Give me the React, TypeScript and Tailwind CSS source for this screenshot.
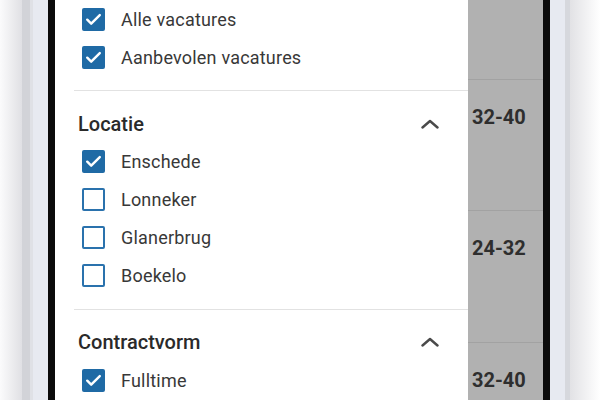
import { ReactNode } from "react";

function Box({ checked }: { checked: boolean }) {
  if (checked) {
    return (
      <div className="w-[23px] h-[23px] rounded-[2px] bg-[#1f6aa5] flex items-center justify-center shrink-0">
        <svg width="23" height="23" viewBox="0 0 22 22" fill="none">
          <path d="M5 11.2l3.8 3.8L17 6.8" stroke="white" strokeWidth="2.3" strokeLinecap="round" strokeLinejoin="round" />
        </svg>
      </div>
    );
  }
  return <div className="w-[23px] h-[23px] rounded-[2px] border-2 border-[#2a72ad] bg-white shrink-0" />;
}

function Item({ label, checked }: { label: string; checked: boolean }) {
  return (
    <div className="h-[38px] flex items-center gap-[16px] pl-[8px]">
      <Box checked={checked} />
      <span className="text-[18px] text-[#383838] tracking-[0.2px]">{label}</span>
    </div>
  );
}

function Heading({ children }: { children: ReactNode }) {
  return (
    <div className="h-[30px] flex items-center justify-between pl-[4px] pr-[29px]">
      <span className="text-[20px] font-medium text-[#2a2a2a]">{children}</span>
      <svg width="18" height="10" viewBox="0 0 18 10" fill="none">
        <path d="M1.5 8.5L9 2l7.5 6.5" stroke="#4a4a4a" strokeWidth="2.4" strokeLinecap="round" strokeLinejoin="round" />
      </svg>
    </div>
  );
}

function Range({ value, top }: { value: string; top?: boolean }) {
  return (
    <div className={top ? "h-[131px] pl-[4px] pt-[22px] border-t border-[#a2a2a2]" : "h-[132px] pl-[4px] pt-[22px] border-t border-[#a2a2a2]"}>
      <span className="text-[20px] font-bold text-[#2e2e2e]">{value}</span>
    </div>
  );
}

export default function App() {
  return (
    <div className="w-[600px] h-[400px] flex bg-white overflow-hidden" style={{ fontFamily: "Roboto, 'Noto Sans', sans-serif" }}>
      <div className="w-[22px] bg-gradient-to-r from-[#fbfbfc] to-[#e0e0e4]" />
      <div className="w-[8px] bg-[#d2d3d8]" />
      <div className="w-[3px] bg-[#dfe1e6]" />
      <div className="w-[15px] bg-[#e7eaf1]" />
      <div className="w-[7px] bg-[#0b0b0b]" />

      <div className="w-[488px] flex">
        <div className="w-[413px] bg-white pl-[19px]">
          <Item label="Alle vacatures" checked />
          <Item label="Aanbevolen vacatures" checked />
          <div className="mt-[14px] h-px bg-[#e2e2e2]" />
          <div className="pt-[18px]">
            <Heading>Locatie</Heading>
          </div>
          <div className="mt-[3px]">
            <Item label="Enschede" checked />
            <Item label="Lonneker" checked={false} />
            <Item label="Glanerbrug" checked={false} />
            <Item label="Boekelo" checked={false} />
          </div>
          <div className="mt-[15px] h-px bg-[#e2e2e2]" />
          <div className="pt-[17px]">
            <Heading>Contractvorm</Heading>
          </div>
          <div className="mt-[4px]">
            <Item label="Fulltime" checked />
          </div>
        </div>
        <div className="flex-1 bg-[#b1b1b1] overflow-hidden">
          <div className="h-[79px]" />
          <Range value="32-40" top />
          <Range value="24-32" />
          <Range value="32-40" />
        </div>
      </div>

      <div className="w-[7px] bg-[#0b0b0b]" />
      <div className="w-[15px] bg-[#e7eaf1]" />
      <div className="w-[5px] bg-[#d6d8dd]" />
      <div className="flex-1 bg-gradient-to-r from-[#e2e2e5] to-[#ffffff]" />
    </div>
  );
}
